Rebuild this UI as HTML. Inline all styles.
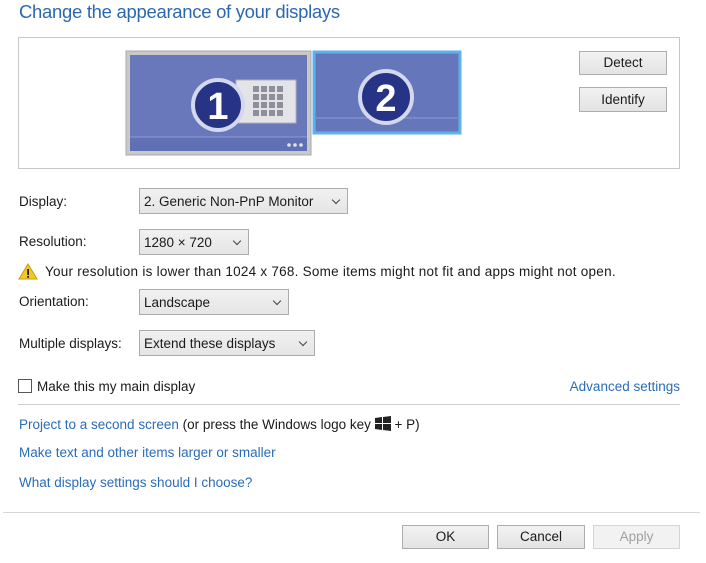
<!DOCTYPE html>
<html><head><meta charset="utf-8"><style>
body{margin:0;width:706px;height:563px;background:#fff;font-family:"Liberation Sans",sans-serif;font-size:13px;color:#1a1a1a;position:relative;overflow:hidden}
.a{position:absolute;white-space:nowrap}
.lk{color:#2a6cb8}
.btn{position:absolute;border:1px solid #adadad;background:linear-gradient(#f2f2f2,#e3e3e3);text-align:center;box-sizing:border-box;font-size:13.5px}
.dd{position:absolute;border:1px solid #acacac;background:linear-gradient(#f1f1f1,#e5e5e5);box-sizing:border-box;padding-left:4px;font-size:13.5px;line-height:25px}
.dd:after{content:"";position:absolute;right:8px;top:8px;width:5px;height:5px;border-right:1.5px solid #444;border-bottom:1.5px solid #444;transform:rotate(45deg)}
.lbl{position:absolute;font-size:13.5px;white-space:nowrap}
</style></head><body>
<div class="a" style="left:19px;top:1px;font-size:18.5px;color:#2b68b0;letter-spacing:-0.3px">Change the appearance of your displays</div>
<div style="position:absolute;left:18px;top:37px;width:662px;height:132px;border:1px solid #c6c6c6;box-sizing:border-box"></div>
<svg style="position:absolute;left:0;top:0" width="706" height="170">
<rect x="126" y="51" width="185" height="104" fill="#c9c9c9" stroke="#a8a8a8"/>
<rect x="130" y="55" width="177" height="96" fill="#5f70b4"/>
<rect x="130" y="55" width="177" height="82" fill="#6878bb"/>
<line x1="130" y1="137" x2="307" y2="137" stroke="#8e9ad0"/>
<circle cx="289" cy="145" r="1.8" fill="#dfe3f3"/><circle cx="295" cy="145" r="1.8" fill="#dfe3f3"/><circle cx="301" cy="145" r="1.8" fill="#dfe3f3"/>
<rect x="236" y="80" width="60" height="43" fill="#e4e4e8" stroke="#b0b0b8"/>
<g fill="#8d8f99">
<rect x="253" y="86" width="6" height="6"/><rect x="261" y="86" width="6" height="6"/><rect x="269" y="86" width="6" height="6"/><rect x="277" y="86" width="6" height="6"/>
<rect x="253" y="94" width="6" height="6"/><rect x="261" y="94" width="6" height="6"/><rect x="269" y="94" width="6" height="6"/><rect x="277" y="94" width="6" height="6"/>
<rect x="253" y="102" width="6" height="6"/><rect x="261" y="102" width="6" height="6"/><rect x="269" y="102" width="6" height="6"/><rect x="277" y="102" width="6" height="6"/>
<rect x="253" y="110" width="6" height="6"/><rect x="261" y="110" width="6" height="6"/><rect x="269" y="110" width="6" height="6"/><rect x="277" y="110" width="6" height="6"/>
</g>
<circle cx="218" cy="105" r="25" fill="#273384" stroke="#d4d8ee" stroke-width="4"/>
<text x="218" y="119" text-anchor="middle" font-family="Liberation Sans" font-weight="bold" font-size="38" fill="#fff">1</text>
<rect x="314" y="52" width="146" height="81" fill="#6676ba" stroke="#5cb2ee" stroke-width="3"/>
<line x1="316" y1="118" x2="458" y2="118" stroke="#8e9ad0"/>
<circle cx="386" cy="97" r="26" fill="#273384" stroke="#d4d8ee" stroke-width="4"/>
<text x="386" y="111" text-anchor="middle" font-family="Liberation Sans" font-weight="bold" font-size="38" fill="#fff">2</text>
</svg>
<div class="btn" style="left:579px;top:51px;width:88px;height:24px;line-height:22px">Detect</div>
<div class="btn" style="left:579px;top:87px;width:88px;height:25px;line-height:23px">Identify</div>

<div class="lbl" style="left:19px;top:194px">Display:</div>
<div class="dd" style="left:139px;top:188px;width:209px;height:26px">2. Generic Non-PnP Monitor</div>
<div class="lbl" style="left:19px;top:234px">Resolution:</div>
<div class="dd" style="left:139px;top:229px;width:110px;height:26px">1280 × 720</div>
<svg style="position:absolute;left:18px;top:263px" width="20" height="17"><path d="M10 1 L19 16 L1 16 Z" fill="#f3c824" stroke="#c79a10"/><rect x="9.2" y="6" width="1.8" height="6" fill="#222"/><rect x="9.2" y="13" width="1.8" height="1.8" fill="#222"/></svg>
<div class="lbl" style="left:45px;top:264px;letter-spacing:0.25px">Your resolution is lower than 1024 x 768. Some items might not fit and apps might not open.</div>
<div class="lbl" style="left:19px;top:294px">Orientation:</div>
<div class="dd" style="left:139px;top:289px;width:150px;height:26px">Landscape</div>
<div class="lbl" style="left:19px;top:336px">Multiple displays:</div>
<div class="dd" style="left:139px;top:330px;width:176px;height:26px">Extend these displays</div>

<div style="position:absolute;left:18px;top:379px;width:14px;height:14px;border:1px solid #555;box-sizing:border-box"></div>
<div class="lbl" style="left:37px;top:379px">Make this my main display</div>
<div class="lbl lk" style="right:26px;top:379px">Advanced settings</div>
<div style="position:absolute;left:18px;top:404px;width:662px;height:1px;background:#d0d0d0"></div>
<div class="lbl" style="left:19px;top:416px"><span class="lk">Project to a second screen</span> (or press the Windows logo key <svg width="16" height="15" style="vertical-align:-2px"><path d="M0 2L7 1V7H0ZM8 1L16 0V7H8ZM0 8H7V14L0 13ZM8 8H16V15L8 14Z" fill="#222"/></svg> + P)</div>
<div class="lbl lk" style="left:19px;top:445px">Make text and other items larger or smaller</div>
<div class="lbl lk" style="left:19px;top:475px">What display settings should I choose?</div>
<div style="position:absolute;left:3px;top:512px;width:697px;height:1px;background:#d8d8d8"></div>
<div class="btn" style="left:402px;top:525px;width:87px;height:24px;line-height:22px">OK</div>
<div class="btn" style="left:497px;top:525px;width:88px;height:24px;line-height:22px">Cancel</div>
<div class="btn" style="left:593px;top:525px;width:87px;height:24px;line-height:22px;color:#a0a0a0;border-color:#d4d4d4;background:#f2f2f2">Apply</div>
</body></html>
